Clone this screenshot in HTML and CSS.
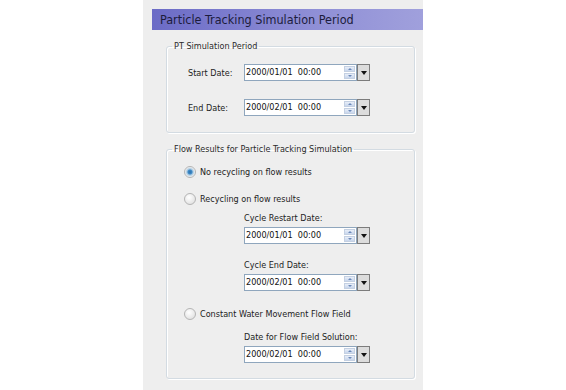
FILE: index.html
```html
<!DOCTYPE html>
<html lang="en">
<head>
  <meta charset="UTF-8" />
  <title>Particle Tracking Simulation Period</title>
  <link rel="stylesheet" href="styles.css">
</head>
<body>

  <div class="panel">
    <div class="title">Particle Tracking Simulation Period</div>

    <fieldset class="group">
      <legend>PT Simulation Period</legend>
      <div class="group-body group-pt">
        <div class="row">
          <span class="row-label">Start Date:</span>
          <div class="datefield">
            <div class="date-text">2000/01/01&nbsp;&nbsp;00:00
              <div class="spin"><span class="spin-up"></span><span class="spin-down"></span></div>
            </div>
            <div class="drop"></div>
          </div>
        </div>
        <div class="row row-end">
          <span class="row-label">End Date:</span>
          <div class="datefield">
            <div class="date-text">2000/02/01&nbsp;&nbsp;00:00
              <div class="spin"><span class="spin-up"></span><span class="spin-down"></span></div>
            </div>
            <div class="drop"></div>
          </div>
        </div>
      </div>
    </fieldset>

    <fieldset class="group">
      <legend>Flow Results for Particle Tracking Simulation</legend>
      <div class="group-body group-flow">

        <div class="radio-row"><span class="radio checked"></span>No recycling on flow results</div>
        <div class="radio-row second"><span class="radio"></span>Recycling on flow results</div>

        <div class="sub">
          <div class="sub-label">Cycle Restart Date:</div>
          <div class="datefield">
            <div class="date-text">2000/01/01&nbsp;&nbsp;00:00
              <div class="spin"><span class="spin-up"></span><span class="spin-down"></span></div>
            </div>
            <div class="drop"></div>
          </div>
          <div class="sub-label next">Cycle End Date:</div>
          <div class="datefield">
            <div class="date-text">2000/02/01&nbsp;&nbsp;00:00
              <div class="spin"><span class="spin-up"></span><span class="spin-down"></span></div>
            </div>
            <div class="drop"></div>
          </div>
        </div>

        <div class="radio-row third"><span class="radio"></span>Constant Water Movement Flow Field</div>

        <div class="sub sub-last">
          <div class="sub-label">Date for Flow Field Solution:</div>
          <div class="datefield">
            <div class="date-text">2000/02/01&nbsp;&nbsp;00:00
              <div class="spin"><span class="spin-up"></span><span class="spin-down"></span></div>
            </div>
            <div class="drop"></div>
          </div>
        </div>
      </div>
    </fieldset>
  </div>

</body>
</html>
```

FILE: styles.css
```css
/* Baseline */
* {
  margin: 0;
  padding: 0;
  box-sizing: border-box;
}
body {
  background: #fff;
  font-family: 'DejaVu Sans Condensed', 'Liberation Sans', sans-serif;
  font-size: 9px;
  color: #222;
  height: 390px;
  overflow: hidden;
}

/* Grey dialog page */
.panel {
  margin-left: 143px;
  width: 280px;
  height: 390px;
  background: #eeeeee;
  padding-top: 9px;
}

.title {
  margin-left: 9px;
  height: 21px;
  line-height: 21px;
  padding-left: 8px;
  font-size: 12.5px;
  color: #1c1c3c;
  background: linear-gradient(90deg, #6b6bc6, #8f8fd6 60%, #a0a0dc);
}

/* Group boxes */
.group {
  margin: 10px 8px 0 23px;
  border: 1px solid #d3dbe2;
  border-radius: 3px;
  box-shadow: inset 1px 1px 0 #fff, 1px 1px 0 #fff;
}
.group legend {
  margin-left: 5px;
  padding: 0 2px;
  line-height: 13px;
  color: #2a2a2a;
}
.group-pt {
  padding: 11px 0 16px 21px;
}
.group-flow {
  padding: 8px 0 15px 17px;
}

.row {
  display: flex;
  align-items: center;
}
.row-end {
  margin-top: 18px;
}
.row-label {
  width: 56px;
}

/* Date picker */
.datefield {
  display: flex;
  width: 126px;
  height: 17px;
}
.date-text {
  flex: 1;
  display: flex;
  align-items: center;
  justify-content: space-between;
  background: #fff;
  border: 1px solid #8fa6bd;
  padding-left: 1px;
  line-height: 15px;
  color: #111;
}
.spin {
  display: flex;
  flex-direction: column;
  gap: 1px;
  width: 11px;
  margin-right: 1px;
}
.spin span {
  height: 6px;
  background: linear-gradient(#e8eef8, #c8d6ec);
  border: 1px solid #c4d0e2;
  position: relative;
}
.spin-up::after,
.spin-down::after {
  content: '';
  position: absolute;
  left: 3px;
  top: 1px;
  border-left: 2px solid transparent;
  border-right: 2px solid transparent;
}
.spin-up::after {
  border-bottom: 2px solid #6a88b8;
}
.spin-down::after {
  border-top: 2px solid #6a88b8;
}
.drop {
  width: 13px;
  background: #dcdcdc;
  border: 1px solid #7c7c7c;
  position: relative;
}
.drop::after {
  content: '';
  position: absolute;
  left: 3px;
  top: 6px;
  border-left: 3px solid transparent;
  border-right: 3px solid transparent;
  border-top: 4px solid #111;
}

/* Radios */
.radio-row {
  display: flex;
  align-items: center;
  height: 16px;
}
.radio-row.second {
  margin-top: 11px;
}
.radio-row.third {
  margin-top: 15px;
}
.radio {
  width: 12px;
  height: 12px;
  margin-right: 4px;
  border-radius: 50%;
  border: 1px solid #b4b4b4;
  background: radial-gradient(circle at 40% 35%, #fff, #dadada);
}
.radio.checked {
  background: radial-gradient(circle, #2f6fa8 0, #3d8ac8 2px, #a8c8e0 3px, #f4f4f4 5px);
}

.sub {
  margin-left: 60px;
  margin-top: 5px;
}
.sub-last {
  margin-top: 9px;
}
.sub-label {
  line-height: 13px;
  margin-bottom: 2px;
}
.sub-label.next {
  margin-top: 15px;
}
```
